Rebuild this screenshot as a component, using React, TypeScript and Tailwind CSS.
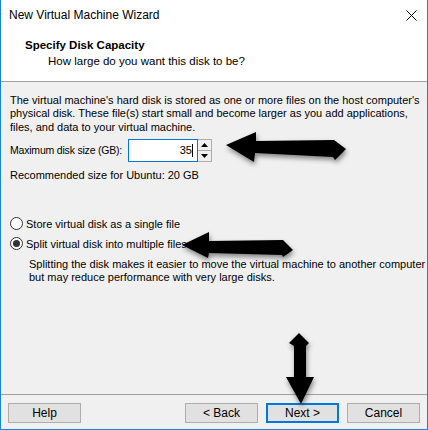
import React from "react";

const font = { fontFamily: '"Liberation Sans", Arial, sans-serif' };

function Arrow({ points }: { points: string }) {
  return <polygon points={points} fill="#000" filter="url(#shadow)" />;
}

function Radio({ checked, label }: { checked?: boolean; label: string }) {
  return (
    <div className="flex items-center h-[20px]">
      <span className="w-[13px] h-[13px] rounded-full border border-[#333] bg-white flex items-center justify-center">
        {checked && <span className="w-[7px] h-[7px] rounded-full bg-[#333]" />}
      </span>
      <span className="ml-[3px]">{label}</span>
    </div>
  );
}

function Btn({ label, primary }: { label: string; primary?: boolean }) {
  return (
    <button
      className={
        "w-[73px] h-[20px] bg-[#e1e1e1] flex items-center justify-center text-[12px] text-black " +
        (primary ? "border-2 border-[#0078d7]" : "border border-[#adadad]")
      }
    >
      {label}
    </button>
  );
}

export default function App() {
  return (
    <div
      className="relative w-[428px] h-[430px] bg-[#f0f0f0] border-x border-b border-[#1883d7] flex flex-col text-black text-[11px] whitespace-nowrap overflow-hidden"
      style={font}
    >
      {/* title bar + header */}
      <div className="bg-white border-b border-[#a0a0a0]">
        <div className="h-[30px] flex items-center justify-between pl-[8px] pr-[10px]">
          <span className="text-[12px]">New Virtual Machine Wizard</span>
          <svg width="11" height="11" viewBox="0 0 11 11">
            <path d="M0.5 0.5 L10.5 10.5 M10.5 0.5 L0.5 10.5" stroke="#000" strokeWidth="1" />
          </svg>
        </div>
        <div className="h-[51px] pl-[24px] pt-[7px]">
          <div className="font-bold text-[11.5px] leading-[16px]">Specify Disk Capacity</div>
          <div className="pl-[23px] text-[11.5px] leading-[16px]">How large do you want this disk to be?</div>
        </div>
      </div>

      {/* body */}
      <div className="flex-1 pl-[9px] pr-[10px] pt-[12px]">
        <p className="leading-[13.3px]">
          The virtual machine's hard disk is stored as one or more files on the host computer's
          <br />
          physical disk. These file(s) start small and become larger as you add applications,
          <br />
          files, and data to your virtual machine.
        </p>
        <div className="flex items-center mt-[5px] h-[23px]">
          <span className="w-[118px] text-[10.5px] tracking-[-0.2px]">Maximum disk size (GB):</span>
          <div className="w-[70px] h-[23px] bg-white border border-[#0078d7] flex items-center justify-end pr-[4px]">
            <span>35</span>
            <span className="w-px h-[13px] bg-black" />
          </div>
          <div className="w-[14px] h-[23px] flex flex-col border border-[#adadad] border-l-0 bg-[#f0f0f0]">
            <div className="flex-1 border-b border-[#adadad] flex items-center justify-center">
              <svg width="7" height="4" viewBox="0 0 7 4"><polygon points="3.5,0 7,4 0,4" fill="#000" /></svg>
            </div>
            <div className="flex-1 flex items-center justify-center">
              <svg width="7" height="4" viewBox="0 0 7 4"><polygon points="0,0 7,0 3.5,4" fill="#000" /></svg>
            </div>
          </div>
        </div>
        <div className="mt-[7px] leading-[13px]">Recommended size for Ubuntu: 20 GB</div>

        <div className="mt-[32px]">
          <Radio label="Store virtual disk as a single file" />
          <Radio checked label="Split virtual disk into multiple files" />
          <p className="pl-[19px] pt-[4px] leading-[13.3px]">
            Splitting the disk makes it easier to move the virtual machine to another computer
            <br />
            but may reduce performance with very large disks.
          </p>
        </div>
      </div>

      {/* footer */}
      <div className="h-[35px] border-t border-[#a0a0a0] flex items-start pt-[8px] pl-[7px]">
        <Btn label="Help" />
        <div className="ml-[104px] flex gap-[8px]">
          <Btn label="< Back" />
          <Btn label="Next >" primary />
          <Btn label="Cancel" />
        </div>
      </div>

      {/* annotation arrows */}
      <svg className="absolute left-0 top-0 pointer-events-none" width="428" height="430">
        <defs>
          <filter id="shadow" x="-20%" y="-20%" width="140%" height="160%">
            <feDropShadow dx="1" dy="3" stdDeviation="2.5" floodColor="#000" floodOpacity="0.45" />
          </filter>
        </defs>
        <Arrow points="225,145 255,132 255,141 333,140 345,149 334,160 332,157 254,153 253,162" />
        <Arrow points="181,245 208,232 208,241 282,240 292,250 282,257 281,255 208,253 207,258" />
        <Arrow points="298,333 308,343 305,346 305,377 313,377 300,404 285,377 293,377 293,346 288,343" />
      </svg>
    </div>
  );
}
